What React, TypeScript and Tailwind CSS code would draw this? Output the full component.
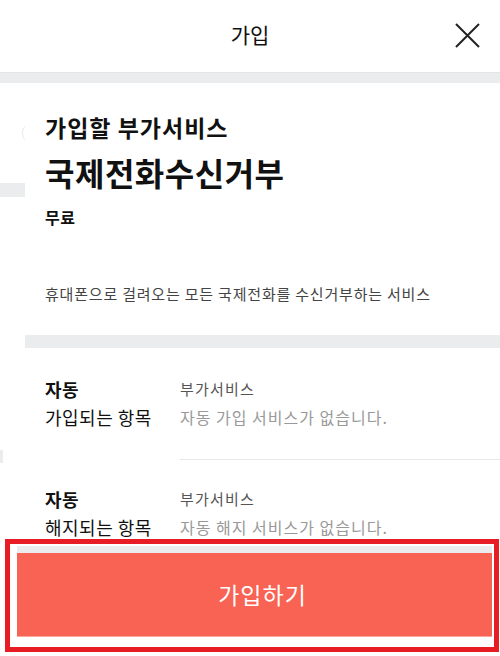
import React from "react";

const font = { fontFamily: '"Noto Sans CJK KR", "Noto Sans", sans-serif' };

export default function App() {
  return (
    <div className="w-[500px] h-[656px] bg-white flex flex-col overflow-hidden" style={font}>
      {/* Header */}
      <div className="h-[73px] shrink-0 border-b border-[#e3e4e6] flex items-center justify-center relative">
        <span className="text-[21px] text-[#111] leading-none -mt-[4px]">가입</span>
        <button className="absolute right-[20px] top-[23px] w-[25px] h-[25px]">
          <svg viewBox="0 0 25 25" width="25" height="25">
            <path d="M1 1 L24 24 M24 1 L1 24" stroke="#222" strokeWidth="2" fill="none" />
          </svg>
        </button>
      </div>
      <div className="h-[10px] shrink-0 bg-[#ebecee]" />

      {/* Body */}
      <div className="flex-1 flex flex-row overflow-hidden">
        {/* background page strip */}
        <div className="w-[25px] shrink-0 overflow-hidden flex flex-col">
          <div className="mt-[39px] ml-[22px] w-[20px] h-[22px] shrink-0 rounded-l-full border-l border-[#e6e6e6]" />
          <div className="mt-[39px] h-[14px] shrink-0 bg-[#ebecee]" />
          <div className="mt-[253px] w-[3px] h-[13px] shrink-0 bg-[#ebecee]" />
        </div>

        {/* Card */}
        <div className="flex-1 flex flex-col">
          <div className="pl-[20px] pt-[29px] pb-[30px] flex flex-col">
            <div className="text-[23px] leading-[30px] font-bold text-[#111] tracking-[1px]">가입할 부가서비스</div>
            <div className="mt-[10px] text-[32px] leading-[40px] font-bold text-[#111] tracking-[0.5px]">국제전화수신거부</div>
            <div className="mt-[13px] text-[16px] leading-[24px] font-bold text-[#111] tracking-[0.5px]">무료</div>
            <div className="mt-[54px] text-[15px] leading-[22px] text-[#444] tracking-[0.8px]">
              휴대폰으로 걸려오는 모든 국제전화를 수신거부하는 서비스
            </div>
          </div>
          <div className="h-[13px] shrink-0 bg-[#ebecee]" />

          <div className="pl-[20px] pt-[27px] pb-[28px] flex flex-row">
            <div className="w-[135px] shrink-0 flex flex-col text-[18px] leading-[28px] text-[#111] tracking-[0.5px]">
              <span className="font-bold">자동</span>
              <span>가입되는 항목</span>
            </div>
            <div className="flex flex-col leading-[28px]">
              <span className="text-[15px] text-[#555] tracking-[1.2px]">부가서비스</span>
              <span className="text-[16px] text-[#999] tracking-[1px]">자동 가입 서비스가 없습니다.</span>
            </div>
          </div>
          <div className="ml-[155px] h-px shrink-0 bg-[#e8e8e8]" />
          <div className="pl-[20px] pt-[25px] flex flex-row">
            <div className="w-[135px] shrink-0 flex flex-col text-[18px] leading-[28px] text-[#111] tracking-[0.5px]">
              <span className="font-bold">자동</span>
              <span>해지되는 항목</span>
            </div>
            <div className="flex flex-col leading-[28px]">
              <span className="text-[15px] text-[#555] tracking-[1.2px]">부가서비스</span>
              <span className="text-[16px] text-[#999] tracking-[1px]">자동 해지 서비스가 없습니다.</span>
            </div>
          </div>
        </div>
      </div>

      {/* Footer */}
      <div className="h-[117px] shrink-0 bg-white pl-[5px] pr-[1px] pb-[4px] flex flex-col">
        <div className="flex-1 border-[5px] border-[#e81c24] pl-[7px] pr-[2px] pt-[2px] pb-[10px] flex flex-col">
          <div className="h-[7px] shrink-0 bg-[#ebecee]" />
          <button className="flex-1 bg-[#f96354] border-b border-[#fba59d] flex items-center justify-center pl-[16px]">
            <span className="text-[23px] text-white leading-none tracking-[1px]">가입하기</span>
          </button>
        </div>
      </div>
    </div>
  );
}
